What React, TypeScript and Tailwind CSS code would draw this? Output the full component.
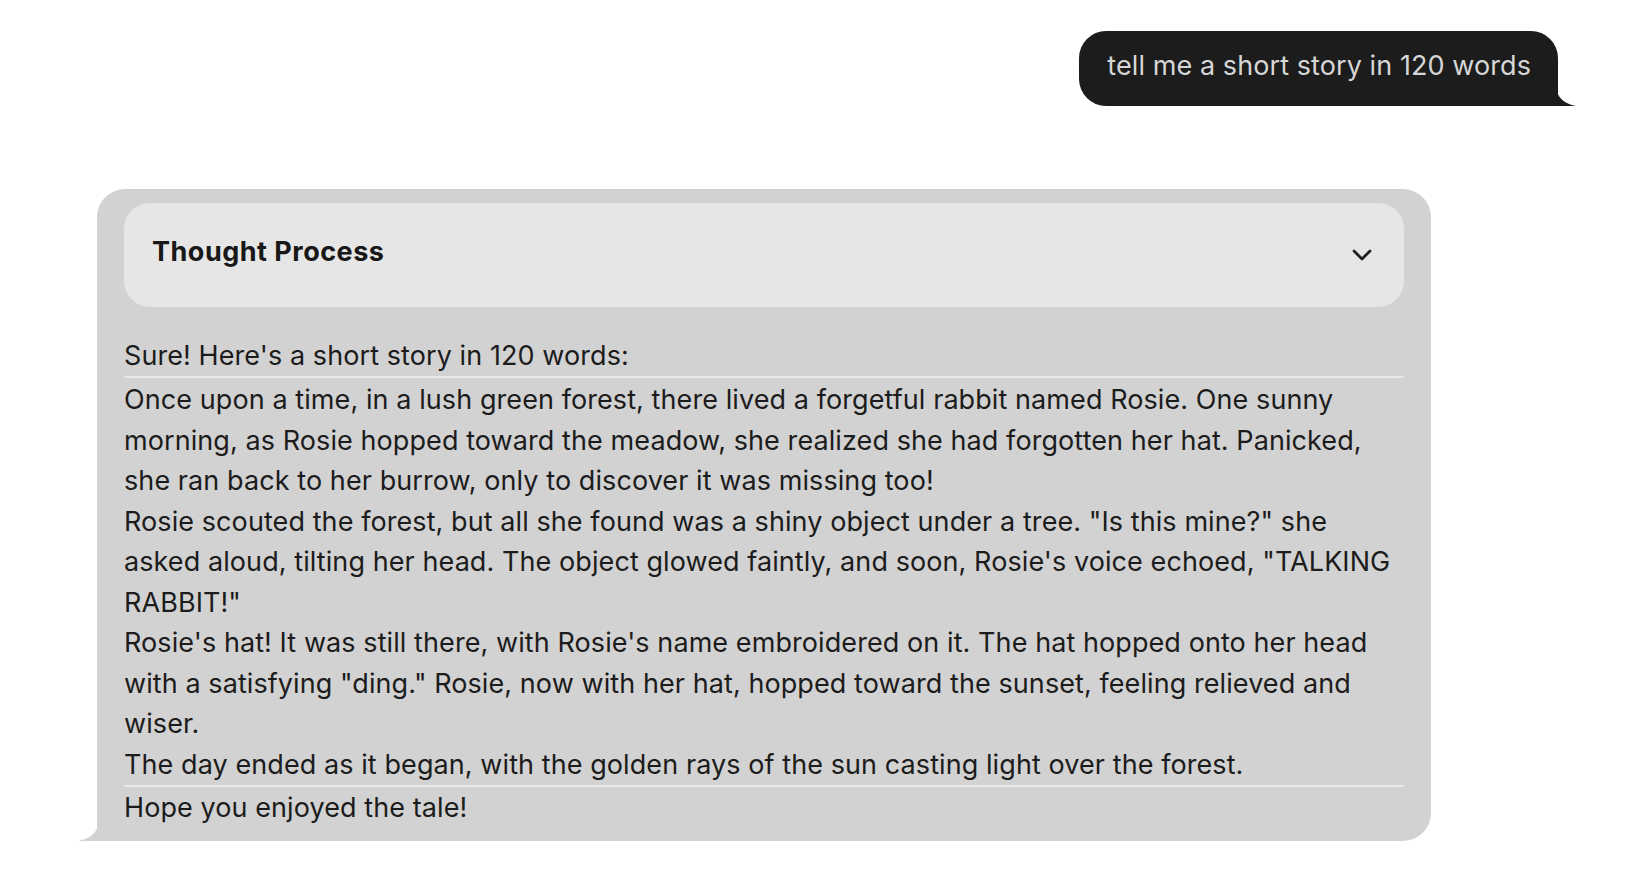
import React from 'react';

const font = { fontFamily: 'Inter, "Noto Sans", sans-serif' };

const UserTail: React.FC = () => (
  <svg className="absolute bottom-0 right-[-18px]" width="20" height="19" viewBox="0 0 20 19">
    <path d="M0 0 C1 10 8 17 20 19 L0 19 Z" fill="#1c1c1c" />
  </svg>
);

const AssistantTail: React.FC = () => (
  <svg className="absolute bottom-0 left-[-19px]" width="20" height="17" viewBox="0 0 20 17">
    <path d="M20 0 C19 9 12 15 0 17 L20 17 Z" fill="#d2d2d2" />
  </svg>
);

const App: React.FC = () => {
  return (
    <div className="min-h-screen bg-white text-[27px] leading-[40.5px] tracking-[0.08px]" style={font}>
      {/* user message */}
      <div className="flex justify-end pt-[31px] pr-[70px]">
        <div className="relative rounded-[27px] rounded-br-none bg-[#1c1c1c] pl-[28px] pr-[27px] pt-[15px] pb-[19px] text-[#d6d6d6]">
          tell me a short story in 120 words
          <UserTail />
        </div>
      </div>

      {/* assistant reply */}
      <div className="relative mt-[83px] ml-[97px] w-[1334px] rounded-[28px] rounded-bl-none bg-[#d2d2d2] px-[27px] pt-[14px] pb-[12px] text-[#1c1c1c]">
        <div className="flex h-[104px] items-center justify-between rounded-[26px] bg-[#e6e6e6] pl-[28px] pr-[32px]">
          <span className="-mt-[4px] font-bold tracking-[0.5px] text-[#181818]">Thought Process</span>
          <svg width="20" height="12" viewBox="0 0 20 12" fill="none">
            <polyline points="2,2 10,10 18,2" stroke="#1f1f1f" strokeWidth="2.8" strokeLinecap="round" strokeLinejoin="round" />
          </svg>
        </div>

        <div className="mt-[29px]">
          <p className="border-b-2 border-[#e8e8e8]">Sure! Here's a short story in 120 words:</p>
          <p className="pt-[2px]">
            Once upon a time, in a lush green forest, there lived a forgetful rabbit named Rosie. One sunny morning, as Rosie hopped toward the meadow, she realized she had forgotten her hat. Panicked, she ran back to her burrow, only to discover it was missing too!
          </p>
          <p>
            Rosie scouted the forest, but all she found was a shiny object under a tree. "Is this mine?" she asked aloud, tilting her head. The object glowed faintly, and soon, Rosie's voice echoed, "TALKING RABBIT!"
          </p>
          <p>
            Rosie's hat! It was still there, with Rosie's name embroidered on it. The hat hopped onto her head with a satisfying "ding." Rosie, now with her hat, hopped toward the sunset, feeling relieved and wiser.
          </p>
          <p className="border-b-2 border-[#e8e8e8]">
            The day ended as it began, with the golden rays of the sun casting light over the forest.
          </p>
          <p className="pt-[1px]">Hope you enjoyed the tale!</p>
        </div>
        <AssistantTail />
      </div>
    </div>
  );
};

export default App;
